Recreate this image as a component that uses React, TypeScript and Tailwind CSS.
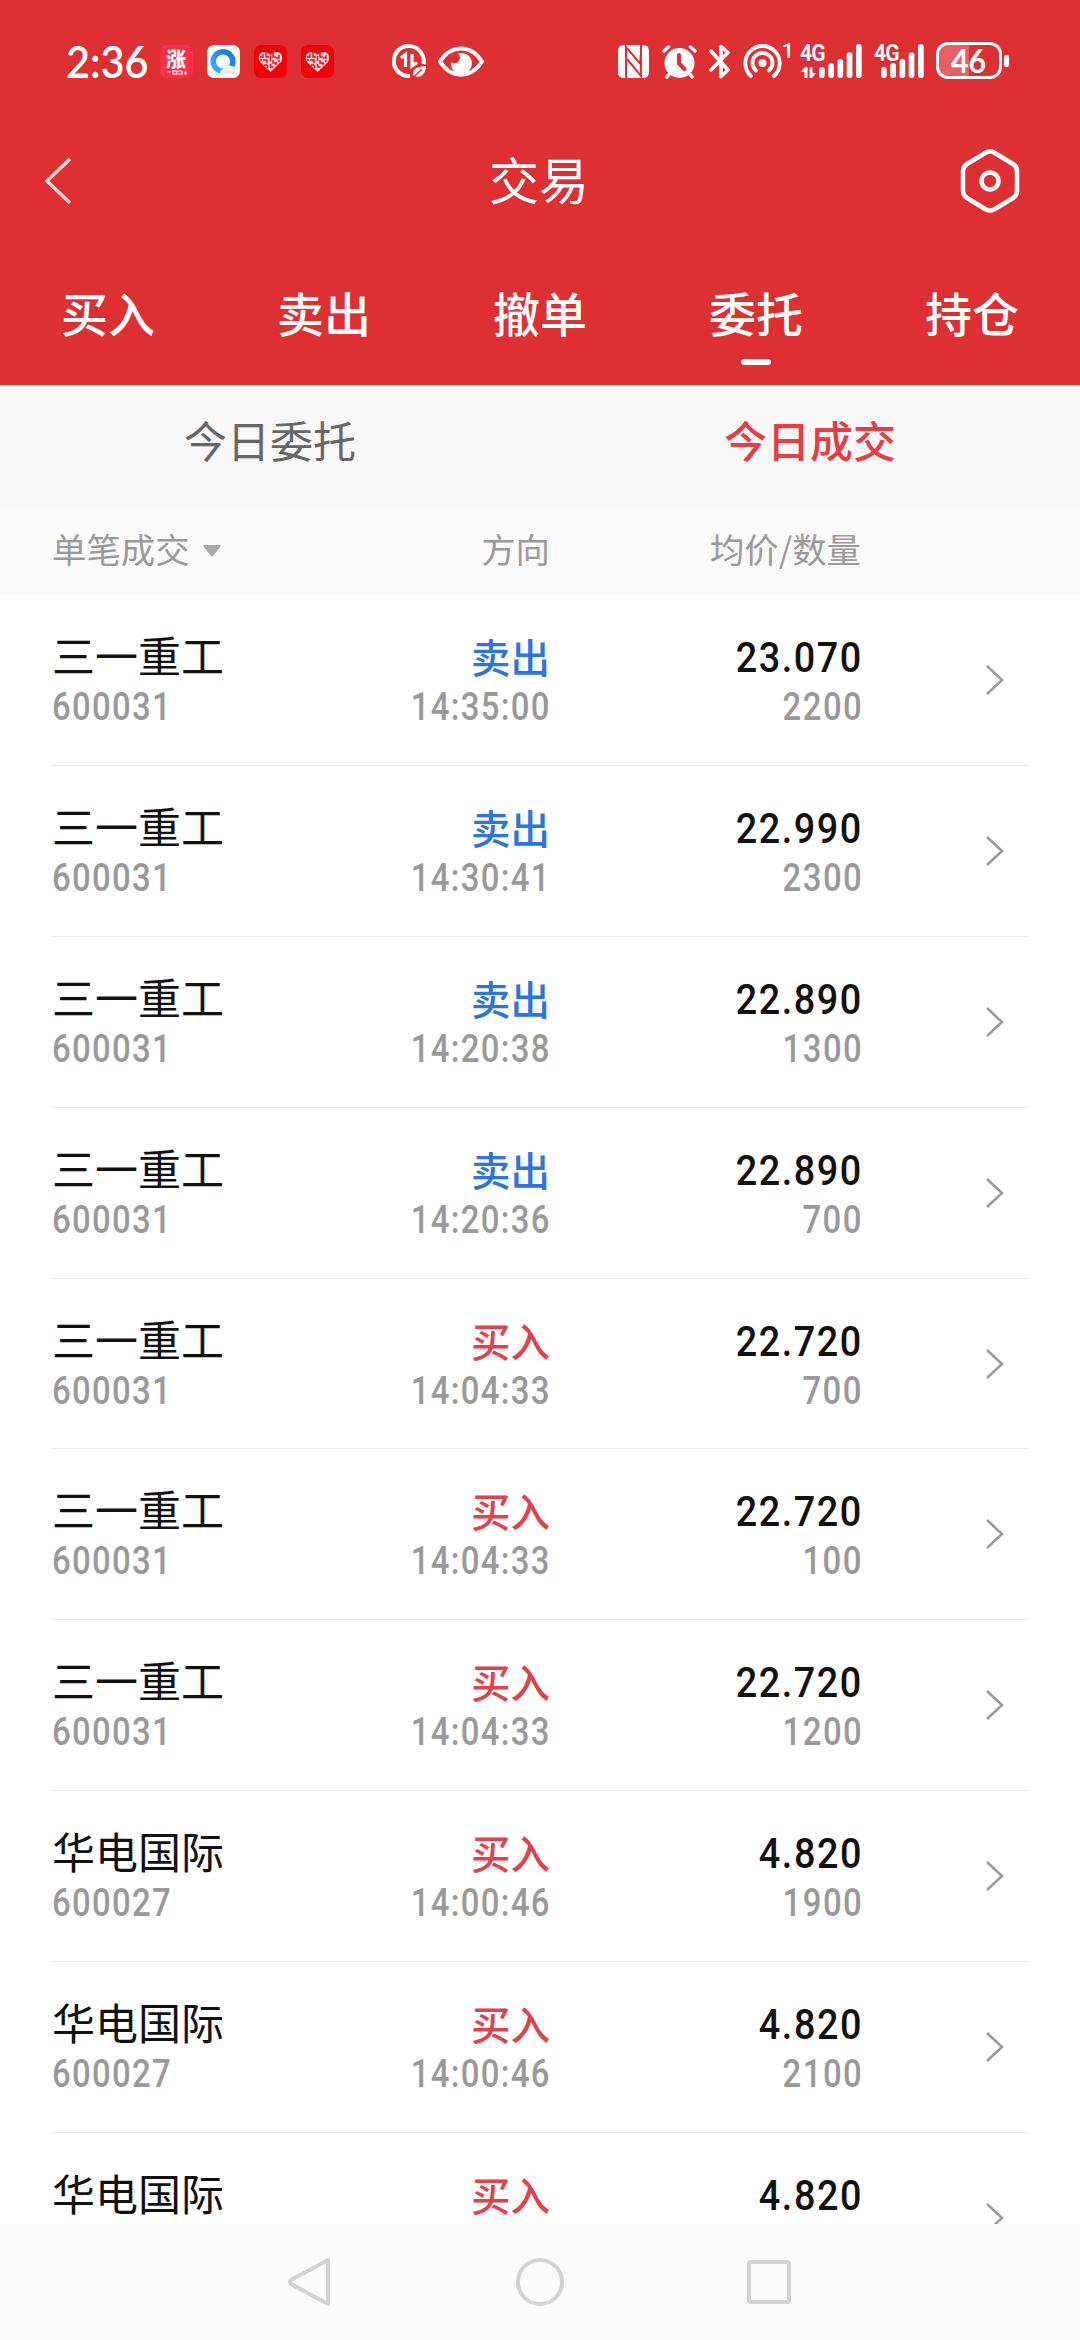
import React from 'react';

interface Trade {
  name: string;
  code?: string;
  side: 'sell' | 'buy';
  time?: string;
  price: string;
  amount?: string;
}

const tabs = ['买入', '卖出', '撤单', '委托', '持仓'];

const trades: Trade[] = [
  { name: '三一重工', code: '600031', side: 'sell', time: '14:35:00', price: '23.070', amount: '2200' },
  { name: '三一重工', code: '600031', side: 'sell', time: '14:30:41', price: '22.990', amount: '2300' },
  { name: '三一重工', code: '600031', side: 'sell', time: '14:20:38', price: '22.890', amount: '1300' },
  { name: '三一重工', code: '600031', side: 'sell', time: '14:20:36', price: '22.890', amount: '700' },
  { name: '三一重工', code: '600031', side: 'buy', time: '14:04:33', price: '22.720', amount: '700' },
  { name: '三一重工', code: '600031', side: 'buy', time: '14:04:33', price: '22.720', amount: '100' },
  { name: '三一重工', code: '600031', side: 'buy', time: '14:04:33', price: '22.720', amount: '1200' },
  { name: '华电国际', code: '600027', side: 'buy', time: '14:00:46', price: '4.820', amount: '1900' },
  { name: '华电国际', code: '600027', side: 'buy', time: '14:00:46', price: '4.820', amount: '2100' },
  { name: '华电国际', side: 'buy', price: '4.820' },
];

const HeartApp = () => (
  <svg className="w-[33px] h-[33px]" viewBox="0 0 33 33">
    <rect width="33" height="33" rx="7" fill="#f20008" />
    <path
      d="M16.5 27 L6 17 C3.500 13 5 7 10 7 C13.500 7 15.500 8.500 16.500 10 C17.500 8.500 19.500 7 23 7 C28 7 29.500 13 27 17Z"
      fill="#ffd9d9"
    />
    <path
      d="M9 9v3h-3M12 7v5h3M9 15h4v3M6 15h2M13 20h-3M16.500 11v5M19 8v4h3M25 10v3h-3M19 15v3h4M26 16h-2M16.500 19v3h3M13.500 23v-3M22 20v-2"
      stroke="#f20008"
      strokeWidth="1.400"
      fill="none"
    />
  </svg>
);

const SignalBars = () => (
  <svg className="w-[43px] h-[34px]" viewBox="0 0 43 34" fill="#fff">
    <rect x="0" y="23" width="5.700" height="11" rx="2.800" />
    <rect x="9.250" y="19" width="5.700" height="15" rx="2.800" />
    <rect x="18.500" y="15" width="5.700" height="19" rx="2.800" />
    <rect x="27.700" y="8.300" width="5.700" height="25.700" rx="2.800" />
    <rect x="37" y="0" width="5.700" height="34" rx="2.800" />
  </svg>
);

const StatusBar = () => (
  <div className="h-[123px] flex items-start pt-[44px] text-white">
    <div className="ml-[66px] w-[94px] h-[34px] flex items-center font-['Lato'] font-semibold text-[45px] leading-none">
      <span className="origin-left scale-x-[0.92]">2:36</span>
    </div>
    <div className="flex gap-[14px] mt-px">
      <svg className="w-[33px] h-[33px] overflow-visible" viewBox="0 0 33 33">
        <rect width="33" height="33" rx="7" fill="#fb3048" />
        <text x="6" y="22" fontSize="20" fontWeight="900" fill="#fff" fontFamily="Noto Sans CJK SC, sans-serif">涨</text>
        <path d="M7 27h4M13 26h4v3h-4zM18 26h4v3h-4M24 28h3M25.500 26v4" stroke="#fff" strokeWidth="1.200" fill="none" />
      </svg>
      <svg className="w-[33px] h-[33px]" viewBox="0 0 33 33">
        <defs>
          <linearGradient id="ring" x1="0" y1="1" x2="1" y2="0">
            <stop offset="0" stopColor="#35b3f5" />
            <stop offset="1" stopColor="#1a72e0" />
          </linearGradient>
        </defs>
        <rect width="33" height="33" rx="7" fill="#fafbfd" />
        <circle cx="16" cy="16.500" r="9.800" stroke="url(#ring)" strokeWidth="5.500" fill="none" />
        <path d="M13 29 a4 4 0 0 1 3-5 a5 5 0 0 1 8-3 a4 4 0 0 1 4 4 q1.500 2 0 4z" fill="#e6eff9" />
      </svg>
      <HeartApp />
      <HeartApp />
    </div>
    <svg className="ml-[58px] w-[34px] h-[34px]" viewBox="0 0 34 34" fill="none" stroke="#fff">
      <path d="M18 32 A15 15 0 1 1 31.500 20" strokeWidth="4" />
      <path d="M9 14 L13.500 10.500 V23 M20 10 V22 L25 18.500" strokeWidth="3.200" />
      <path d="M21.500 32 C20 25 25 22.500 34 22 C33.500 30 29 34.500 22.500 32Z" fill="#fff" stroke="none" />
      <path d="M22.500 32 L30 25.500" stroke="#de3032" strokeWidth="1.500" />
    </svg>
    <svg className="ml-[12px] mt-[2px] w-[46px] h-[31px]" viewBox="0 0 46 31">
      <path d="M2 15.500 C13-2 33-2 44 15.500 C33 33 13 33 2 15.500Z" fill="none" stroke="#fff" strokeWidth="4" strokeLinejoin="round" />
      <path d="M20 7.500 A10.500 10.500 0 1 1 13 16 A5 5 0 0 0 20 7.500Z" fill="#fff" />
    </svg>
    <svg className="ml-[134px] mt-px w-[31px] h-[33px]" viewBox="0 0 31 33">
      <path d="M6 0 H25 Q31 0 31 6 V27 Q31 33 25 33 H6 Q0 33 0 27 V6 Q0 0 6 0Z" fill="#fff" />
      <path d="M8 33 V2 L22.500 19 V10 M23 0 V31 L9 14" fill="none" stroke="#de3032" strokeWidth="2" />
    </svg>
    <svg className="ml-[13px] mt-px w-[35px] h-[34px]" viewBox="0 0 35 34" fill="none" stroke="#fff" strokeLinecap="round">
      <circle cx="17.500" cy="18" r="15" fill="#fff" stroke="none" />
      <path d="M2 6 L6.500 2 M33 6 L28.500 2 M5 32 L8 28 M30 32 L27 28" strokeWidth="3.500" />
      <path d="M17 10 V18.500 L22.500 24" stroke="#de3032" strokeWidth="4" />
    </svg>
    <svg className="ml-[12px] w-[22px] h-[35px]" viewBox="0 0 22 35" fill="none" stroke="#fff" strokeWidth="3.600" strokeLinejoin="round" strokeLinecap="round">
      <path d="M2 7 L19 26 L12 32.500 V2.500 L19 8.500 L2 26" />
    </svg>
    <svg className="ml-[12px] w-[39px] h-[34px]" viewBox="0 0 39 34" fill="none" stroke="#fff" strokeWidth="3.800" strokeLinecap="round">
      <path d="M8 32 A17.200 17.200 0 1 1 31 32" />
      <path d="M13 26.500 A10 10 0 1 1 26 26.500" />
      <circle cx="19.500" cy="19" r="4" fill="#fff" stroke="none" />
    </svg>
    <span className="w-[18px] -mt-[3px] font-['Roboto'] font-medium text-[21px] leading-[21px]">1</span>
    <div className="relative w-[62px] h-[34px]">
      <span className="absolute left-0 -top-px font-['Roboto'] font-semibold text-[24px] leading-[21px] tracking-[-1px] origin-left scale-x-[0.88] whitespace-nowrap">4G</span>
      <svg className="absolute left-px bottom-0 w-[15px] h-[11px]" viewBox="0 0 15 11" fill="#fff">
        <path d="M0 5 L4 0 H6.500 V11 H3.500 V5Z M8.500 0 H11.500 V6 H15 L11 11 H8.500Z" />
      </svg>
      <div className="absolute left-[19px] top-0">
        <SignalBars />
      </div>
    </div>
    <div className="relative ml-[12px] w-[50px] h-[34px]">
      <span className="absolute left-0 -top-px font-['Roboto'] font-semibold text-[24px] leading-[21px] tracking-[-1px] origin-left scale-x-[0.88] whitespace-nowrap">4G</span>
      <div className="absolute left-[7px] top-0">
        <SignalBars />
      </div>
    </div>
    <div className="ml-[12px] -mt-[2px] flex items-center">
      <div className="w-[66px] h-[37px] rounded-[12px] border-[3px] border-white bg-[linear-gradient(90deg,#e85f61_50%,#de3032_50%)] flex items-center justify-center font-['Lato'] font-bold text-[32px] leading-none">
        <span className="scale-x-[0.95]">46</span>
      </div>
      <div className="ml-[2px] w-[5px] h-[12px] rounded-[2px] bg-white" />
    </div>
  </div>
);

const TradeRow: React.FC<{ trade: Trade }> = ({ trade }) => (
  <div className="mx-[52px] h-[170.875px] shrink-0 border-b border-[#e9e9e9] flex items-start pt-[34px]">
    <div className="w-[200px] flex flex-col">
      <span className="text-[43px] leading-[50px] text-[#111]">{trade.name}</span>
      {trade.code && (
        <span className="mt-[4px] font-['Roboto'] font-medium text-[38px] leading-[48px] tracking-[1.5px] text-[#999] origin-left scale-x-[0.865]">
          {trade.code}
        </span>
      )}
    </div>
    <div className="w-[298px] flex flex-col items-end">
      <span className={`text-[39.500px] leading-[50px] mt-[2px] font-medium ${trade.side === 'sell' ? 'text-[#2b74e2]' : 'text-[#e0414b]'}`}>
        {trade.side === 'sell' ? '卖出' : '买入'}
      </span>
      {trade.time && (
        <span className="mt-[2px] -mr-px font-['Roboto'] font-medium text-[38px] leading-[48px] tracking-[1.5px] text-[#999] origin-right scale-x-[0.865]">
          {trade.time}
        </span>
      )}
    </div>
    <div className="w-[311px] flex flex-col items-end">
      <span className="mt-[4px] -mr-[2px] font-['Roboto'] font-medium text-[42.500px] leading-[50px] tracking-[1.700px] text-[#111] origin-right scale-x-[0.89]">
        {trade.price}
      </span>
      {trade.amount && (
        <span className="-mr-[2px] font-['Roboto'] font-medium text-[38px] leading-[48px] tracking-[1.7px] text-[#999] origin-right scale-x-[0.865]">
          {trade.amount}
        </span>
      )}
    </div>
    <svg className="ml-[125px] mt-[36px] w-[18px] h-[30px]" viewBox="0 0 18 30" fill="none" stroke="#999" strokeWidth="2.500">
      <path d="M1 1 L16 15 L1 29" />
    </svg>
  </div>
);

export default function App() {
  return (
    <div className="w-[1080px] h-[2340px] overflow-hidden flex flex-col bg-white font-['Noto_Sans_CJK_SC',sans-serif]">
      {/* Header */}
      <header className="h-[385px] shrink-0 bg-[#de3032] text-white">
        <StatusBar />
        <div className="h-[116px] grid grid-cols-3 items-center pl-[44px] pr-[60px]">
          <svg className="w-[60px] h-[48px]" viewBox="0 0 60 48" fill="none" stroke="#fff" strokeOpacity="0.800" strokeWidth="3.500">
            <path d="M26 2 L3 24 L26 46" />
          </svg>
          <span className="text-[50px] leading-[50px] text-center pl-[14px] -mt-[6px]">交易</span>
          <svg className="w-[60px] h-[64px] justify-self-end" viewBox="0 0 60 64" fill="none" stroke="#fff" strokeWidth="4.500" strokeLinejoin="round">
            <path d="M26 3.500 Q30 1.500 34 3.500 L53 15 Q57 17.500 57 22 V42 Q57 46.500 53 49 L34 60.500 Q30 62.500 26 60.500 L7 49 Q3 46.500 3 42 V22 Q3 17.500 7 15Z" />
            <circle cx="30" cy="32" r="8.500" />
          </svg>
        </div>
        <nav className="h-[146px] grid grid-cols-5">
          {tabs.map((tab) => (
            <div key={tab} className="flex flex-col items-center pt-[48px]">
              <span className="text-[47px] leading-[50px] font-medium">{tab}</span>
              {tab === '委托' && <div className="mt-[22px] w-[30px] h-[6px] rounded-[3px] bg-white" />}
            </div>
          ))}
        </nav>
      </header>

      {/* Sub tabs */}
      <div className="h-[123px] shrink-0 grid grid-cols-2 bg-[#f8f8f8] text-[43px] leading-[50px] text-center pt-[29px]">
        <span className="text-[#666]">今日委托</span>
        <span className="text-[#e83c46] font-medium">今日成交</span>
      </div>

      {/* Column titles */}
      <div className="h-[87px] shrink-0 flex items-center bg-[#fafafa] text-[34.400px] leading-[40px] text-[#999] pl-[52px] pb-[7px]">
        <div className="w-[200px] flex items-center">
          <span>单笔成交</span>
          <svg className="ml-[13px] mt-[5px] w-[18px] h-[12px]" viewBox="0 0 18 12">
            <path d="M1 0 H17 Q18 0 17.500 1.500 L10 11 Q9 12 8 11 L0.500 1.500 Q0 0 1 0Z" fill="#aaa" />
          </svg>
        </div>
        <span className="w-[298px] text-right">方向</span>
        <span className="w-[311px] text-right">均价/数量</span>
      </div>

      {/* Trade list */}
      <main className="flex-1 min-h-0 overflow-hidden flex flex-col">
        {trades.map((trade, index) => (
          <TradeRow key={index} trade={trade} />
        ))}
      </main>

      {/* System navigation */}
      <footer className="h-[116px] shrink-0 flex items-center justify-center bg-[#fcfcfc]">
        <svg className="w-[504px] h-[50px]" viewBox="0 0 504 50" fill="none" stroke="#d2d2d2" strokeWidth="4" strokeLinejoin="round">
          <path d="M40 3 L3 23 Q1 25 3 27 L40 47Z" />
          <circle cx="252" cy="25" r="22" />
          <rect x="461" y="5" width="40" height="40" rx="2" />
        </svg>
      </footer>
    </div>
  );
}
